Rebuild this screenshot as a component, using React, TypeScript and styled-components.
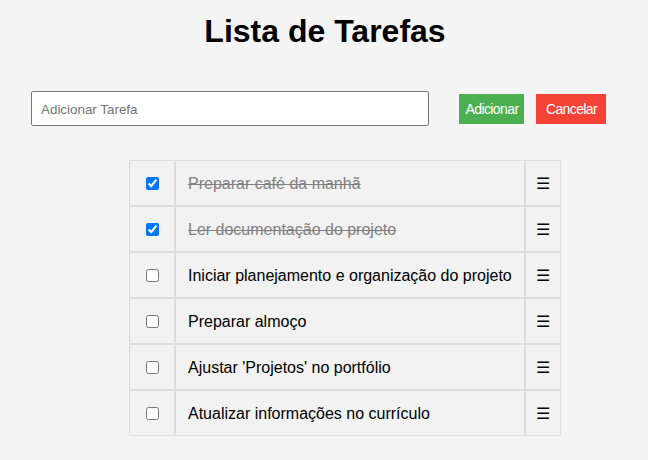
import React from "react";
import styled, { createGlobalStyle } from "styled-components";

const Global = createGlobalStyle`
  html, body { margin: 0; padding: 0; background: #f4f4f4; }
  body { font-family: "Liberation Sans", Arial, sans-serif; color: #000; }
`;

const Page = styled.div`
  display: flex;
  flex-direction: column;
  width: 648px;
`;

const Title = styled.h1`
  margin: 13px 0 0 0;
  font-size: 32px;
  line-height: 37px;
  font-weight: bold;
  text-align: center;
  padding-left: 2px;
`;

const Form = styled.div`
  display: flex;
  align-items: center;
  margin: 41px 0 0 31px;
`;

const Input = styled.input`
  box-sizing: border-box;
  width: 398px;
  height: 35px;
  border: 1px solid #767676;
  border-radius: 2px;
  padding: 1px 9px 0;
  font-family: "Liberation Sans", Arial, sans-serif;
  font-size: 13.4px;
  background: #fff;
  outline: none;
  &::placeholder { color: #757575; }
`;

const Button = styled.button<{ $bg: string; $ml: number; $w: number }>`
  box-sizing: border-box;
  height: 30px;
  width: ${(p) => p.$w}px;
  margin-left: ${(p) => p.$ml}px;
  border: none;
  padding: 0 0 0 1px;
  background: ${(p) => p.$bg};
  color: #fff;
  font-family: "Liberation Sans", Arial, sans-serif;
  font-size: 14px;
  letter-spacing: -0.6px;
  font-weight: normal;
  cursor: pointer;
`;

const Table = styled.table`
  margin: 34px 0 0 129px;
  width: 432px;
  border-spacing: 0;
  border-collapse: separate;
`;

const Cell = styled.td<{ $done?: boolean }>`
  box-sizing: border-box;
  border: 1px solid #dddddd;
  background: #f2f2f2;
  padding: 13px 12px 11px;
  height: 46px;
  font-size: 16px;
  line-height: 20px;
  ${(p) => (p.$done ? "text-decoration: line-through; color: #808080;" : "color: #000;")}
`;

const CheckCell = styled(Cell)`
  width: 46px;
  padding: 0;
  text-align: center;
`;

const MenuCell = styled(Cell)`
  width: 36px;
  padding: 13px 0 11px;
  text-align: center;
`;

const Check = styled.input`
  margin: 0;
  width: 13px;
  height: 13px;
  vertical-align: middle;
`;

const tasks = [
  { text: "Preparar café da manhã", done: true },
  { text: "Ler documentação do projeto", done: true },
  { text: "Iniciar planejamento e organização do projeto", done: false },
  { text: "Preparar almoço", done: false },
  { text: "Ajustar 'Projetos' no portfólio", done: false },
  { text: "Atualizar informações no currículo", done: false },
];

export default function App() {
  return (
    <>
      <Global />
      <Page>
        <Title>Lista de Tarefas</Title>
        <Form>
          <Input placeholder="Adicionar Tarefa" />
          <Button $bg="#4caf50" $ml={30} $w={65}>Adicionar</Button>
          <Button $bg="#f44336" $ml={12} $w={70}>Cancelar</Button>
        </Form>
        <Table>
          <tbody>
            {tasks.map((t) => (
              <tr key={t.text}>
                <CheckCell>
                  <Check type="checkbox" checked={t.done} readOnly />
                </CheckCell>
                <Cell $done={t.done}>{t.text}</Cell>
                <MenuCell>☰</MenuCell>
              </tr>
            ))}
          </tbody>
        </Table>
      </Page>
    </>
  );
}
